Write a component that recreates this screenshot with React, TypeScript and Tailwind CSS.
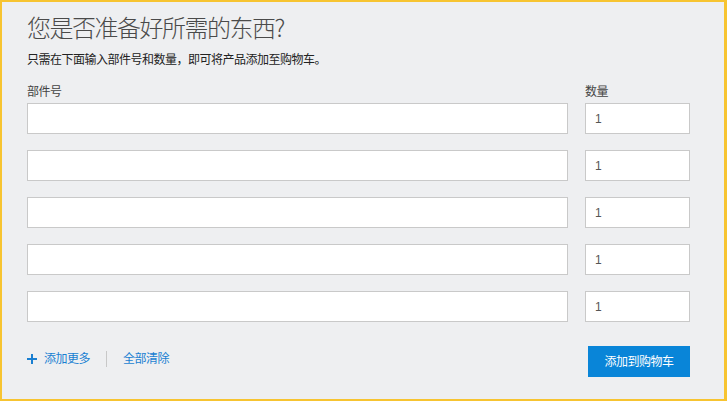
import React from "react";

const rows = [0, 1, 2, 3, 4];

export default function App() {
  return (
    <div
      className="w-[728px] h-[402px] bg-white"
      style={{ fontFamily: '"Liberation Sans", "Noto Sans CJK SC", sans-serif' }}
    >
      <div className="w-[727px] h-[401px] border-2 border-[#f7c431] bg-[#eeeff1] pl-[25px] pr-[34px] pt-[7px] flex flex-col border-r-[3px]">
        <h1
          className="text-[24px] leading-[36px] text-[#4a4a4a] font-light tracking-[-1.5px]"
          style={{ fontFamily: '"Noto Sans CJK SC", "Noto Sans", sans-serif' }}
        >
          您是否准备好所需的东西?
        </h1>
        <p className="mt-[7px] text-[12px] leading-[16px] text-[#222] tracking-[-0.5px]">
          只需在下面输入部件号和数量，即可将产品添加至购物车。
        </p>
        <div className="mt-[16px] flex gap-[17px]">
          <div className="flex-1 flex flex-col">
            <div className="text-[12px] leading-[16px] text-[#444] h-[16px] tracking-[-0.5px]">部件号</div>
            <div className="mt-[3px] flex flex-col gap-[16px]">
              {rows.map((r) => (
                <input
                  key={r}
                  className="h-[31px] w-full bg-white border border-[#c9c9c9] outline-none"
                />
              ))}
            </div>
          </div>
          <div className="w-[105px] flex flex-col">
            <div className="text-[12px] leading-[16px] text-[#444] h-[16px] tracking-[-0.5px]">数量</div>
            <div className="mt-[3px] flex flex-col gap-[16px]">
              {rows.map((r) => (
                <input
                  key={r}
                  defaultValue="1"
                  className="h-[31px] w-full bg-white border border-[#c9c9c9] outline-none px-[9px] text-[12px] text-[#555]"
                />
              ))}
            </div>
          </div>
        </div>
        <div className="mt-[24px] flex items-center justify-between">
          <div className="flex items-center text-[12px] text-[#1a7fd1] pb-[6px] tracking-[-0.5px]">
            <svg width="10" height="10" viewBox="0 0 10 10" className="mr-[7px]">
              <path d="M5 0v10M0 5h10" stroke="#1a7fd1" strokeWidth="2" />
            </svg>
            <span>添加更多</span>
            <span className="mx-[16px] w-px h-[16px] bg-[#c8c8c8]" />
            <span>全部清除</span>
          </div>
          <button className="w-[102px] h-[31px] bg-[#0985d8] text-white text-[12px] tracking-[-0.5px]">
            添加到购物车
          </button>
        </div>
      </div>
    </div>
  );
}
